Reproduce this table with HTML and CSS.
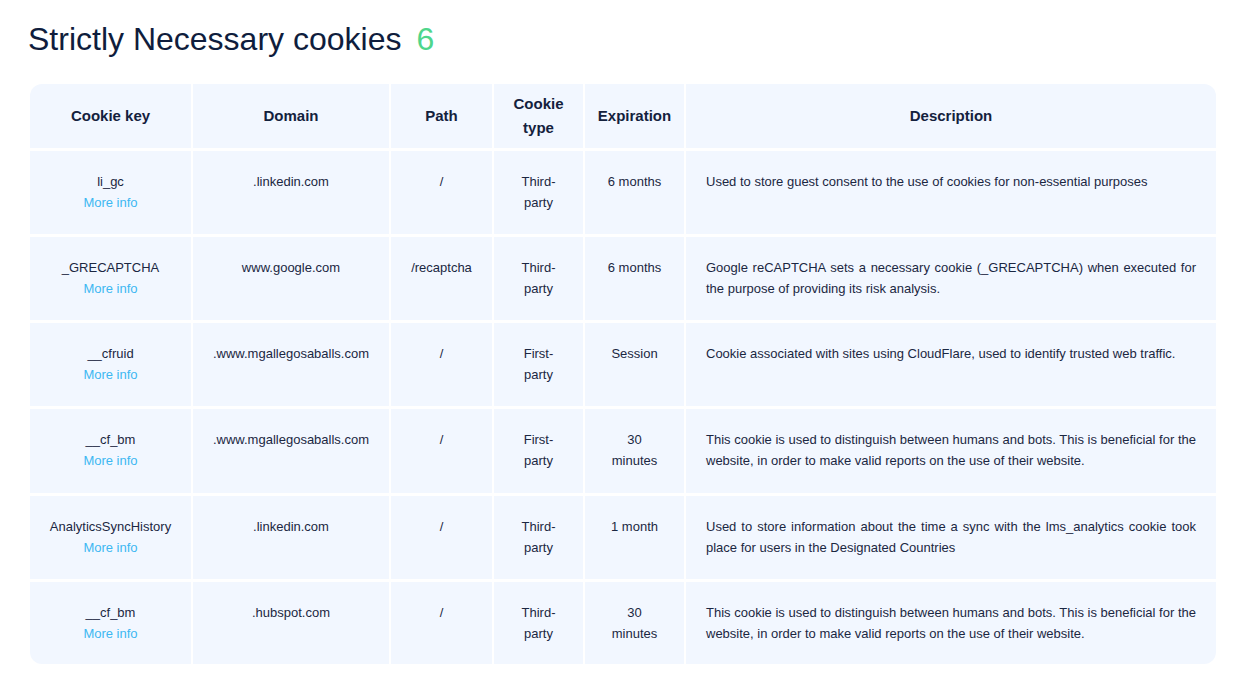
FILE: index.html
```html
<!DOCTYPE html>
<html lang="en">
<head>
<meta charset="utf-8">
<title>Strictly Necessary cookies</title>
<link rel="stylesheet" href="styles.css">
</head>
<body>
<section class="page">
  <h1 class="title">Strictly Necessary cookies<span class="count">6</span></h1>
  <div class="table" role="table">
    <div class="th">Cookie key</div>
    <div class="th">Domain</div>
    <div class="th">Path</div>
    <div class="th">Cookie type</div>
    <div class="th">Expiration</div>
    <div class="th">Description</div>

    <div class="td">li_gc<a class="more" href="#">More info</a></div>
    <div class="td">.linkedin.com</div>
    <div class="td">/</div>
    <div class="td">Third-party</div>
    <div class="td">6 months</div>
    <div class="td desc">Used to store guest consent to the use of cookies for non-essential purposes</div>

    <div class="td">_GRECAPTCHA<a class="more" href="#">More info</a></div>
    <div class="td">www.google.com</div>
    <div class="td">/recaptcha</div>
    <div class="td">Third-party</div>
    <div class="td">6 months</div>
    <div class="td desc">Google reCAPTCHA sets a necessary cookie (_GRECAPTCHA) when executed for the purpose of providing its risk analysis.</div>

    <div class="td">__cfruid<a class="more" href="#">More info</a></div>
    <div class="td">.www.mgallegosaballs.com</div>
    <div class="td">/</div>
    <div class="td">First-party</div>
    <div class="td">Session</div>
    <div class="td desc">Cookie associated with sites using CloudFlare, used to identify trusted web traffic.</div>

    <div class="td">__cf_bm<a class="more" href="#">More info</a></div>
    <div class="td">.www.mgallegosaballs.com</div>
    <div class="td">/</div>
    <div class="td">First-party</div>
    <div class="td">30 minutes</div>
    <div class="td desc">This cookie is used to distinguish between humans and bots. This is beneficial for the website, in order to make valid reports on the use of their website.</div>

    <div class="td">AnalyticsSyncHistory<a class="more" href="#">More info</a></div>
    <div class="td">.linkedin.com</div>
    <div class="td">/</div>
    <div class="td">Third-party</div>
    <div class="td">1 month</div>
    <div class="td desc">Used to store information about the time a sync with the lms_analytics cookie took place for users in the Designated Countries</div>

    <div class="td">__cf_bm<a class="more" href="#">More info</a></div>
    <div class="td">.hubspot.com</div>
    <div class="td">/</div>
    <div class="td">Third-party</div>
    <div class="td">30 minutes</div>
    <div class="td desc">This cookie is used to distinguish between humans and bots. This is beneficial for the website, in order to make valid reports on the use of their website.</div>
  </div>
</section>
</body>
</html>
```

FILE: styles.css
```css
html, body {
  margin: 0;
  padding: 0;
  background: #ffffff;
}

body {
  font-family: "Liberation Sans", Arial, Helvetica, sans-serif;
  color: #1b2742;
}

.page {
  padding: 19px 35px 0 30px;
}

.title {
  margin: 0 0 25px -2px;
  font-size: 32px;
  line-height: 40px;
  font-weight: 400;
  color: #0f1d3d;
}

.count {
  margin-left: 15px;
  color: #4fd68b;
}

.table {
  display: grid;
  grid-template-columns: 161px 196px 101px 89px 99px 1fr;
  grid-template-rows: 64px 83px 83px 83px 84px 83px 82px;
  column-gap: 2px;
  row-gap: 3px;
  border-radius: 12px;
  overflow: hidden;
  width: 1186px;
}

.th {
  background: #f2f7ff;
  display: flex;
  align-items: center;
  justify-content: center;
  text-align: center;
  padding: 0 8px;
  font-size: 15px;
  line-height: 24px;
  font-weight: 700;
  color: #14213d;
}

.td {
  background: #f2f7ff;
  padding: 20px 18px 0;
  font-size: 13px;
  line-height: 21px;
  text-align: center;
  color: #1b2742;
}

.td.desc {
  padding: 20px 20px 0;
  text-align: justify;
}

.more {
  display: block;
  color: #3db7f2;
  text-decoration: none;
}
```
